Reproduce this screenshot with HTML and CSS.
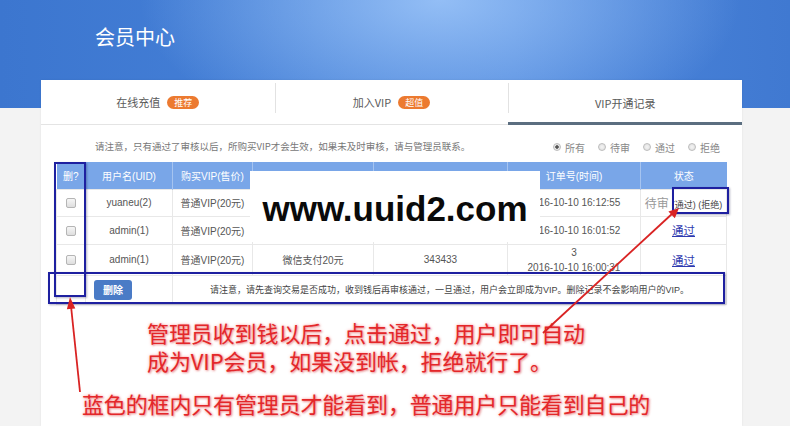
FILE: index.html
```html
<!DOCTYPE html>
<html lang="zh-CN">
<head>
<meta charset="utf-8">
<title>会员中心</title>
<link rel="stylesheet" href="styles.css">
</head>
<body>
<header class="banner">
  <h1 class="banner-title">会员中心</h1>
</header>
<main class="card">
  <nav class="tabs">
    <div class="tab"><span>在线充值</span><span class="badge">推荐</span></div>
    <div class="tab tab-divided"><span>加入VIP</span><span class="badge">超值</span></div>
    <div class="tab tab-divided tab-active"><span>VIP开通记录</span></div>
  </nav>
  <div class="toolbar">
    <p class="notice">请注意，只有通过了审核以后，所购买VIP才会生效，如果未及时审核，请与管理员联系。</p>
    <div class="filters">
      <label class="radio"><span class="radio-dot radio-checked"></span>所有</label>
      <label class="radio"><span class="radio-dot"></span>待审</label>
      <label class="radio"><span class="radio-dot"></span>通过</label>
      <label class="radio"><span class="radio-dot"></span>拒绝</label>
    </div>
  </div>
  <table class="records">
    <colgroup>
      <col class="c1"><col class="c2"><col class="c3"><col class="c4"><col class="c5"><col class="c6"><col class="c7">
    </colgroup>
    <thead>
      <tr class="row-head"><th>删?</th><th>用户名(UID)</th><th>购买VIP(售价)</th><th></th><th></th><th>订单号(时间)</th><th>状态</th></tr>
    </thead>
    <tbody>
      <tr class="row-a">
        <td><span class="check"></span></td><td>yuaneu(2)</td><td>普通VIP(20元)</td><td></td><td></td>
        <td>2016-10-10 16:12:55</td>
        <td class="status"><span class="pending">待审</span> <span class="actions">(通过) (拒绝)</span></td>
      </tr>
      <tr class="row-b">
        <td><span class="check"></span></td><td>admin(1)</td><td>普通VIP(20元)</td><td></td><td></td>
        <td>2016-10-10 16:01:52</td>
        <td class="status"><a class="pass" href="#">通过</a></td>
      </tr>
      <tr class="row-c">
        <td><span class="check"></span></td><td>admin(1)</td><td>普通VIP(20元)</td><td>微信支付20元</td><td>343433</td>
        <td class="two-line">3<br>2016-10-10 16:00:31</td>
        <td class="status"><a class="pass" href="#">通过</a></td>
      </tr>
      <tr class="row-foot">
        <td></td>
        <td class="btn-cell"><button class="btn-del" type="button">删除</button></td>
        <td colspan="5" class="foot-note">请注意，请先查询交易是否成功，收到钱后再审核通过，一旦通过，用户会立即成为VIP。删除记录不会影响用户的VIP。</td>
      </tr>
    </tbody>
  </table>
  <div class="notes">
    <p class="note-line note-first">管理员收到钱以后，点击通过，用户即可自动</p>
    <p class="note-line note-second">成为VIP会员，如果没到帐，拒绝就行了。</p>
    <p class="note-line note-sub">蓝色的框内只有管理员才能看到，普通用户只能看到自己的</p>
  </div>

  <div class="watermark">www.uuid2.com</div>
  <div class="frame frame-col"></div>
  <div class="frame frame-foot"></div>
  <div class="frame frame-actions"></div>
  <svg class="arrows" width="701" height="346" viewBox="0 0 701 346">
    <line x1="502" y1="253" x2="632" y2="133" stroke="#d92323" stroke-width="1.8"/>
    <polygon points="638,128 633.8,138.2 627.4,131.4" fill="#d92323"/>
    <line x1="39" y1="312" x2="30" y2="226" stroke="#d92323" stroke-width="1.8"/>
    <polygon points="29,217 34.3,228.5 25.9,229.3" fill="#d92323"/>
  </svg>
</main>
</body>
</html>
```

FILE: styles.css
```css
html, body {
  margin: 0;
  padding: 0;
}
body {
  width: 790px;
  height: 426px;
  overflow: hidden;
  background: #f3f3f3;
  font-family: "Liberation Sans", "Noto Sans CJK SC", sans-serif;
  color: #555;
}
.banner {
  height: 108px;
  box-sizing: border-box;
  padding: 25px 0 0 95px;
  background:
    radial-gradient(ellipse 300px 150px at 440px 0, rgba(160, 200, 250, 0.85), rgba(160, 200, 250, 0) 100%),
    linear-gradient(90deg, #3c76cf 0%, #4681d8 40%, #4c86dc 65%, #4079d1 100%);
}
.banner-title {
  margin: 0;
  font-family: "Noto Sans CJK SC", sans-serif;
  font-weight: 400;
  font-size: 20px;
  line-height: 24px;
  color: #fff;
}
.card {
  position: relative;
  width: 701px;
  height: 346px;
  margin: -28px 0 0 41px;
  background: #fff;
  box-shadow: 0 0 2px rgba(0, 0, 0, 0.08);
  overflow: hidden;
}
.tabs {
  display: flex;
  height: 45px;
  border-bottom: 1px solid #e4e4e4;
  box-sizing: border-box;
}
.tab {
  flex: 1;
  display: flex;
  align-items: center;
  justify-content: center;
  gap: 7px;
  font-size: 11px;
  color: #5a5a5a;
  font-family: "Noto Sans CJK SC", sans-serif;
}
.tab-divided {
  background: linear-gradient(#e2e2e2, #e2e2e2) no-repeat left 3px / 1px 30px;
}
.tab-active {
  box-shadow: inset 0 -3px 0 #5b6e80;
  margin-bottom: -1px;
}
.badge {
  display: inline-block;
  height: 13px;
  line-height: 13px;
  padding: 0 7px;
  border-radius: 7px;
  background: #ec7a30;
  color: #fff;
  font-size: 9px;
}
.toolbar {
  display: flex;
  align-items: center;
  height: 37px;
  box-sizing: border-box;
  padding: 4px 0 0 54px;
}
.notice {
  margin: 0;
  font-size: 9.5px;
  color: #777;
  font-family: "Noto Sans CJK SC", sans-serif;
}
.filters {
  display: flex;
  gap: 13px;
  margin-left: auto;
  padding-right: 22px;
  padding-top: 3px;
}
.radio {
  display: flex;
  align-items: center;
  gap: 4px;
  font-size: 10px;
  color: #888;
  font-family: "Noto Sans CJK SC", sans-serif;
}
.radio-dot {
  width: 8px;
  height: 8px;
  border-radius: 50%;
  border: 1px solid #bdbdbd;
  background: radial-gradient(circle, #f4f4f4 0, #dcdcdc 100%);
  box-sizing: border-box;
}
.radio-checked {
  background: radial-gradient(circle, #555 0, #555 35%, #e8e8e8 45%);
}
.records {
  width: 670px;
  margin-left: 15px;
  border-collapse: collapse;
  table-layout: fixed;
  font-size: 10px;
  color: #555;
}
.c1 { width: 29px; }
.c2 { width: 87px; }
.c3 { width: 80px; }
.c4 { width: 121px; }
.c5 { width: 134px; }
.c6 { width: 133px; }
.c7 { width: 86px; }
.records th {
  height: 27px;
  padding: 0;
  background: #79a6e8;
  color: #fff;
  font-weight: 400;
  font-size: 10px;
  border-right: 1px solid #a6c4f0;
  box-sizing: border-box;
}
.records th:last-child {
  border-right: none;
}
.records td {
  padding: 0;
  text-align: center;
  border: 1px solid #e8e8e8;
  vertical-align: middle;
}
.row-a td { height: 26px; }
.row-b td { height: 27px; }
.row-c td { height: 29px; }
.row-foot td { height: 28px; }
.two-line {
  line-height: 15px;
}
.check {
  display: inline-block;
  width: 8px;
  height: 8px;
  border: 1px solid #b5b5b5;
  border-radius: 2px;
  background: linear-gradient(#f6f6f6, #dedede);
  vertical-align: middle;
}
.status {
  white-space: nowrap;
}
.pending {
  font-size: 12px;
  color: #999;
}
.actions {
  font-size: 9px;
  color: #444;
}
.pass {
  font-size: 11.5px;
  color: #2f3bb0;
  text-decoration: underline;
}
.btn-cell {
  text-align: left !important;
  padding-left: 8px !important;
}
.btn-del {
  width: 38px;
  height: 20px;
  border: none;
  border-radius: 3px;
  background: #4a7bc6;
  color: #fff;
  font-size: 10px;
  font-weight: 700;
  font-family: "Noto Sans CJK SC", sans-serif;
  padding: 0;
}
.foot-note {
  font-size: 9px;
  color: #444;
  font-family: "Liberation Sans", "Noto Sans CJK SC", sans-serif;
}
.notes {
  font-family: "Noto Sans CJK SC", sans-serif;
  font-size: 22px;
  color: #e3272a;
  text-shadow: 0 0 3px rgba(255, 140, 140, 0.9), 1px 1px 2px rgba(190, 60, 60, 0.45);
}
.note-line {
  height: 28px;
  line-height: 28px;
  margin: 0;
  white-space: nowrap;
}
.note-first {
  margin: 13px 0 0 106px;
  letter-spacing: -0.1px;
}
.note-second {
  margin-left: 106px;
  letter-spacing: -0.1px;
}
.note-sub {
  margin: 15px 0 0 41px;
  letter-spacing: -0.15px;
}
.watermark {
  position: absolute;
  left: 209px;
  top: 91px;
  width: 290px;
  height: 71px;
  background: #fff;
  font-family: "Liberation Sans", sans-serif;
  font-weight: 700;
  font-size: 35px;
  line-height: 71px;
  text-align: center;
  color: #0a0a0a;
  padding-top: 2px;
  box-sizing: border-box;
}
.frame {
  position: absolute;
  border: 2px solid #1e20a0;
  box-sizing: border-box;
  box-shadow: 1px 1px 2px rgba(0, 0, 60, 0.3);
}
.frame-col {
  left: 13px;
  top: 82px;
  width: 32px;
  height: 135px;
}
.frame-foot {
  left: 7px;
  top: 192px;
  width: 677px;
  height: 32px;
}
.frame-actions {
  left: 631px;
  top: 107px;
  width: 57px;
  height: 27px;
}
.arrows {
  position: absolute;
  left: 0;
  top: 0;
  pointer-events: none;
}
```
